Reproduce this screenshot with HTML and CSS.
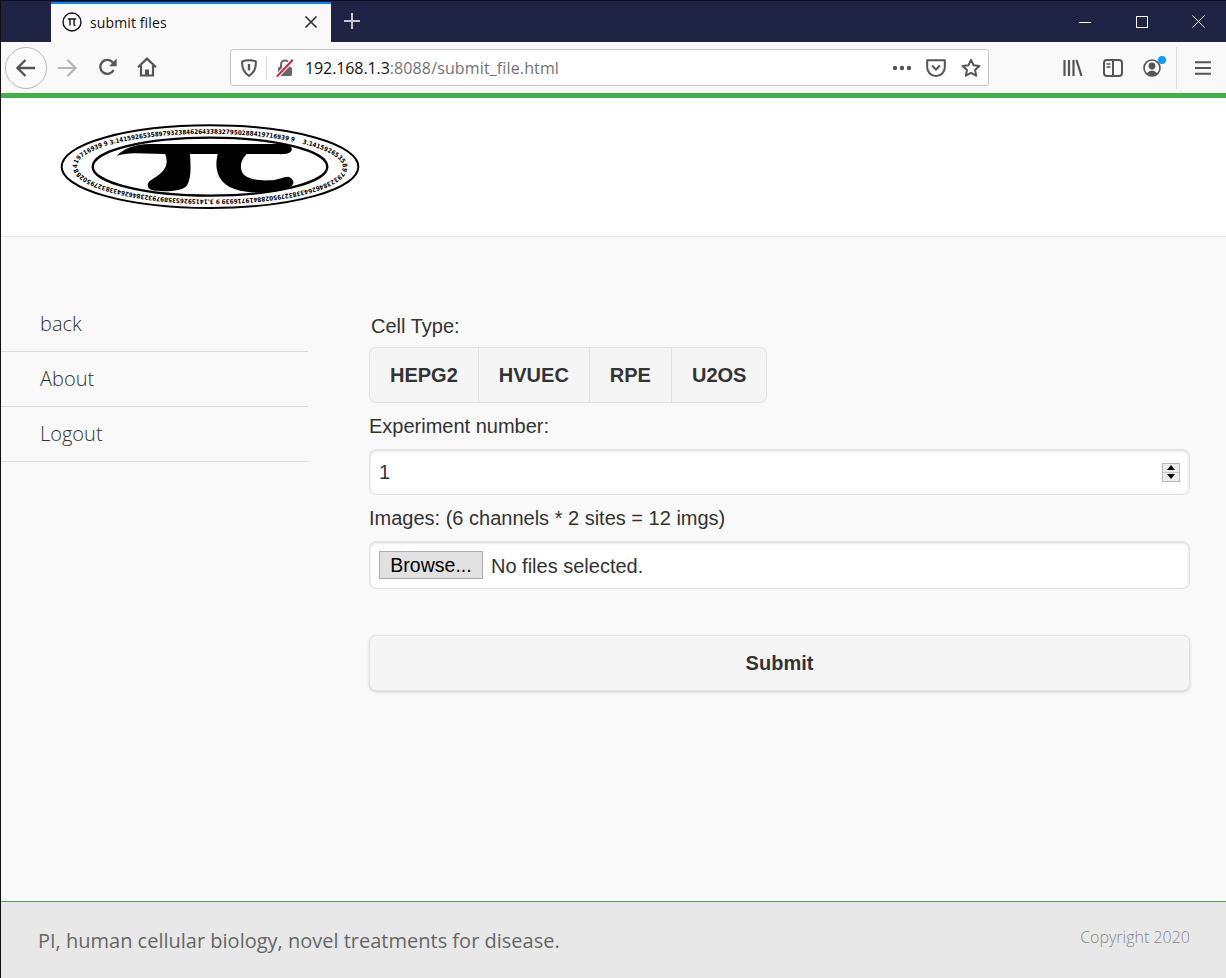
FILE: index.html
```html
<!DOCTYPE html>
<html lang="en">
<head>
<meta charset="utf-8">
<title>submit files</title>
<link rel="stylesheet" href="styles.css">
</head>
<body>
<div class="window">
  <div class="titlebar">
    <div class="tab">
      <svg class="favicon" viewBox="0 0 20 20"><circle cx="10" cy="10" r="9" fill="#fff" stroke="#111" stroke-width="1.4"/><path d="M5.8 7h8.4M8 7v6.5M12 7v5.2q0 1.3 1.5 1.2" fill="none" stroke="#111" stroke-width="1.4"/></svg>
      <span class="tab-title">submit files</span>
      <svg class="tab-close" viewBox="0 0 14 14"><path d="M1.5 1.5l11 11M12.5 1.5l-11 11" stroke="#333" stroke-width="1.7"/></svg>
    </div>
    <svg class="new-tab" viewBox="0 0 18 18"><path d="M9 1v16M1 9h16" stroke="#c4c6d2" stroke-width="2"/></svg>
    <div class="win-controls">
      <span class="win-btn"><svg width="12" height="12" viewBox="0 0 12 12"><path d="M0 6.5h12" stroke="#fff"/></svg></span>
      <span class="win-btn"><svg width="12" height="12" viewBox="0 0 12 12"><rect x=".5" y=".5" width="11" height="11" fill="none" stroke="#fff"/></svg></span>
      <span class="win-btn"><svg width="13" height="13" viewBox="0 0 13 13"><path d="M.5.5l12 12M12.5.5l-12 12" stroke="#fff"/></svg></span>
    </div>
  </div>
  <div class="toolbar">
    <span class="back-btn"><svg width="22" height="20" viewBox="0 0 22 20"><path d="M20 10H3M10.5 2L2.5 10l8 8" fill="none" stroke="#555" stroke-width="2.4"/></svg></span>
    <svg class="tb-forward" width="22" height="20" viewBox="0 0 22 20"><path d="M2 10h17M11.5 2l8 8-8 8" fill="none" stroke="#b5b5b6" stroke-width="2.2"/></svg>
    <svg class="tb-reload" width="20" height="20" viewBox="0 0 20 20"><path d="M15.6 13a7 7 0 1 1-.6-7.2" fill="none" stroke="#555" stroke-width="2.4"/><path d="M18.6 1.6v7.6h-7.4z" fill="#555"/></svg>
    <svg class="tb-home" width="20" height="20" viewBox="0 0 20 20"><path d="M1 10.2L10 1.6l9 8.6M4 8.6V18.5h12V8.6" fill="none" stroke="#555" stroke-width="2.2"/><path d="M8 18v-5.5h4V18z" fill="#555"/></svg>
    <div class="urlbar">
      <svg class="url-shield" width="16" height="18" viewBox="0 0 16 18"><path d="M1.2 2.4Q8 .2 14.8 2.4 15.4 12.5 8 16.8 .6 12.5 1.2 2.4z" fill="none" stroke="#555" stroke-width="2"/><path d="M6.8 5h2.4v6.4H6.8z" fill="#555"/></svg>
      <span class="url-sep"></span>
      <svg class="url-lock" width="18" height="20" viewBox="0 0 18 20"><path d="M5 10V6.5a4 4 0 0 1 8 0V10" fill="none" stroke="#666" stroke-width="2"/><rect x="2" y="9" width="14" height="9" rx="1.5" fill="#666"/><path d="M.8 18.6L16.8 1.8" stroke="#f9f9fa" stroke-width="4.4"/><path d="M.8 18.6L16.8 1.8" stroke="#e8173e" stroke-width="2"/></svg>
      <span class="url-text"><span class="url-host">192.168.1.3</span>:8088/submit_file.html</span>
      <svg class="url-dots" width="20" height="6" viewBox="0 0 20 6"><circle cx="3" cy="3" r="2.2" fill="#555"/><circle cx="10" cy="3" r="2.2" fill="#555"/><circle cx="17" cy="3" r="2.2" fill="#555"/></svg>
      <svg class="url-pocket" width="20" height="18" viewBox="0 0 20 18"><path d="M1.2 1.2h17.6v7a8.8 8.8 0 0 1-17.6 0z" fill="none" stroke="#555" stroke-width="2" stroke-linejoin="round"/><path d="M6 6.5l4 4 4-4" fill="none" stroke="#555" stroke-width="2"/></svg>
      <svg class="url-star" width="20" height="20" viewBox="0 0 20 20"><path d="M10 1.8l2.5 5.4 5.9.7-4.4 4 1.2 5.8L10 14.8l-5.2 2.9L6 11.9l-4.4-4 5.9-.7z" fill="none" stroke="#555" stroke-width="2" stroke-linejoin="round"/></svg>
    </div>
    <svg class="tb-library" width="20" height="18" viewBox="0 0 20 18"><path d="M1.5 1v16M6 1v16M10.5 1v16M13.5 1l5 16" fill="none" stroke="#555" stroke-width="2.2"/></svg>
    <svg class="tb-sidebar" width="20" height="18" viewBox="0 0 20 18"><rect x="1" y="1" width="18" height="16" rx="3" fill="none" stroke="#555" stroke-width="2"/><path d="M10 1v16" stroke="#555" stroke-width="2"/><path d="M3.5 5h4M3.5 8h4" stroke="#555" stroke-width="1.6"/></svg>
    <span class="account">
      <svg width="18" height="18" viewBox="0 0 18 18"><circle cx="9" cy="9" r="8" fill="none" stroke="#555" stroke-width="1.6"/><circle cx="9" cy="7" r="3.4" fill="#555"/><path d="M3.6 14.4q5.4-6 10.8 0Q9 18 3.6 14.4z" fill="#555"/></svg>
      <span class="account-dot"></span>
    </span>
    <span class="tb-sep"></span>
    <svg class="tb-menu" width="16" height="14" viewBox="0 0 16 14"><path d="M0 1.2h16M0 7h16M0 12.8h16" stroke="#555" stroke-width="2"/></svg>
  </div>
  <div class="accent"></div>
  <header class="site-header">
    <svg class="logo" viewBox="0 0 960 315" aria-label="PI logo">
      <defs>
        <path id="ring" d="M757 86.4A392 97 0 1 1 203 223.6A392 97 0 1 1 757 86.4"/>
      </defs>
      <ellipse cx="480" cy="155" rx="445" ry="124" fill="#fff" stroke="#000" stroke-width="6"/>
      <text class="logo-digits"><textPath href="#ring" textLength="1680" lengthAdjust="spacingAndGlyphs">3.14159265358979323846264338327950288419716939 9 3.14159265358979323846264338327950288419716939 9 3.14159265358979323846264338327950288419716939 9</textPath></text>
      <ellipse cx="480" cy="155" rx="352" ry="87" fill="#fff" stroke="#000" stroke-width="7"/>
      <path d="M200 122C225 100 250 88 300 87L690 87C715 87 728 95 725 105C722 118 700 118 680 117L590 117C572 135 568 155 578 175C590 192 625 198 660 196C685 195 700 185 715 185C730 190 735 203 725 213C700 232 640 235 590 230C535 225 505 200 500 160C498 145 500 130 503 117L420 117C422 150 425 190 410 212C400 228 340 232 308 226C292 222 288 208 300 197C325 182 350 165 350 140C350 130 348 122 345 117L260 115C240 114 215 118 200 122Z" fill="#000"/>
    </svg>
  </header>
  <main class="content">
    <nav class="sidenav">
      <a class="nav-item">back</a>
      <a class="nav-item">About</a>
      <a class="nav-item">Logout</a>
    </nav>
    <form class="form">
      <label class="label label-cell">Cell Type:</label>
      <div class="btn-group">
        <button type="button" class="seg">HEPG2</button>
        <button type="button" class="seg">HVUEC</button>
        <button type="button" class="seg">RPE</button>
        <button type="button" class="seg">U2OS</button>
      </div>
      <label class="label label-exp">Experiment number:</label>
      <div class="field field-number">
        <span class="field-value">1</span>
        <span class="spinner">
          <span class="spin"><svg width="8" height="5" viewBox="0 0 8 5"><path d="M4 0l4 5H0z"/></svg></span>
          <span class="spin"><svg width="8" height="5" viewBox="0 0 8 5"><path d="M0 0h8L4 5z"/></svg></span>
        </span>
      </div>
      <label class="label label-img">Images: (6 channels * 2 sites = 12 imgs)</label>
      <div class="field field-file">
        <button type="button" class="browse">Browse...</button>
        <span class="file-status">No files selected.</span>
      </div>
      <button type="button" class="submit">Submit</button>
    </form>
  </main>
  <footer class="footer">
    <span class="foot-left">PI, human cellular biology, novel treatments for disease.</span>
    <span class="foot-right">Copyright 2020</span>
  </footer>
</div>
</body>
</html>
```
FILE: styles.css
```css
* { box-sizing: border-box; }
html, body { margin: 0; padding: 0; }
body { width: 1226px; height: 978px; overflow: hidden; background: #f9f9f9; }
.window { width: 1226px; height: 978px; display: flex; flex-direction: column; border-left: 1px solid #111; font-family: "Liberation Sans", Arial, sans-serif; color: #333; }

.titlebar { height: 42px; flex: none; background: #1f2445; display: flex; align-items: stretch; padding-top: 1px; border-top: 1px solid #0d0f20; }
.tab { width: 280px; margin-left: 50px; background: #f9f9fa; border-top: 2px solid #0a84ff; display: flex; align-items: center; padding: 0 13px 2px 11px; }
.favicon { width: 20px; height: 20px; flex: none; }
.tab-title { margin-left: 8px; font: 14px "Open Sans", sans-serif; letter-spacing: .12px; color: #111; flex: 1; }
.tab-close { width: 14px; height: 14px; }
.new-tab { width: 18px; height: 18px; margin: 10px 0 0 12px; }
.win-controls { margin-left: auto; display: flex; margin-right: -1px; }
.win-btn { width: 57px; display: flex; align-items: center; justify-content: center; padding-bottom: 1px; }

.toolbar { height: 51px; flex: none; background: #f9f9fa; display: flex; align-items: center; position: relative; }
.back-btn { width: 42px; height: 42px; margin-left: 4px; border: 1px solid #b9b9bb; border-radius: 50%; background: #fbfbfb; display: flex; align-items: center; justify-content: center; flex: none; }
.tb-forward { margin-left: 9px; flex: none; }
.tb-reload { margin: 0 0 2px 20px; flex: none; }
.tb-home { margin: 0 0 2px 19px; flex: none; }
.urlbar { width: 759px; height: 37px; margin-left: 73px; flex: none; background: #fff; border: 1px solid #c4c4c6; border-radius: 3px; display: flex; align-items: center; }
.url-shield { margin-left: 10px; flex: none; }
.url-sep { width: 1px; height: 24px; background: #dcdcde; margin-left: 9px; flex: none; }
.url-lock { margin-left: 9px; flex: none; }
.url-text { margin-left: 11px; font: 16px "Open Sans", sans-serif; color: #737373; letter-spacing: .13px; flex: 1; white-space: nowrap; }
.url-host { color: #111; letter-spacing: -.1px; }
.url-dots { margin-right: 14px; flex: none; }
.url-pocket { margin-right: 15px; flex: none; }
.url-star { margin-right: 7px; flex: none; }
.tb-library { margin-left: 74px; flex: none; }
.tb-sidebar { margin-left: 20px; flex: none; }
.account { width: 18px; height: 18px; margin-left: 20px; position: relative; flex: none; display: block; }
.account svg { display: block; }
.account-dot { position: absolute; top: -3px; right: -5px; width: 8px; height: 8px; border-radius: 50%; background: #0a9dff; }
.tb-sep { width: 1px; height: 42px; background: #dedee0; margin-left: 15px; flex: none; }
.tb-menu { margin-left: 18px; flex: none; }

.accent { height: 5px; flex: none; background: #3fb14c; }
.site-header { height: 139px; flex: none; background: #fff; border-bottom: 1px solid #e9e9e9; display: flex; padding: 17px 0 0 49px; }
.logo { width: 320px; height: 105px; display: block; }
.logo-digits { font: 700 19px "DejaVu Sans", sans-serif; fill: #000; }

.content { flex: 1; display: flex; background: #f9f9f9; padding-top: 60px; }
.sidenav { width: 307px; flex: none; display: flex; flex-direction: column; }
.nav-item { height: 55px; flex: none; padding: 11px 0 0 39px; font: 300 20px/32px "Open Sans", sans-serif; color: #333; border-bottom: 1px solid #dedede; }

.form { width: 821px; margin-left: 61px; display: flex; flex-direction: column; align-items: stretch; }
.label { font-size: 20px; line-height: 22px; color: #333; display: block; }
.label-cell { margin: 18px 0 0 2px; }
.btn-group { align-self: flex-start; display: flex; height: 56px; margin-top: 10px; border: 1px solid #e2e2e2; border-radius: 7px; background: #f5f5f5; }
.seg { height: 100%; padding: 0 20px; border: 0; border-left: 1px solid #e2e2e2; background: transparent; font: 700 20px "Liberation Sans", Arial, sans-serif; color: #333; }
.seg:first-child { border-left: 0; }
.label-exp { margin-top: 12px; }
.field { width: 821px; background: #fff; border: 1px solid #e2e2e2; border-radius: 7px; box-shadow: inset 0 1px 3px rgba(0,0,0,.16); display: flex; align-items: center; }
.field-number { height: 46px; margin-top: 12px; padding: 0 9px; }
.field-value { font-size: 20px; color: #333; flex: 1; }
.spinner { width: 18px; height: 19px; background: #c9c9c9; border: 1px solid #b9b9b9; display: flex; flex-direction: column; justify-content: space-between; }
.spin { height: 8px; background: #ececec; display: flex; align-items: center; justify-content: center; }
.spin svg { display: block; }
.label-img { margin-top: 12px; }
.field-file { height: 48px; margin-top: 12px; padding: 0 9px; }
.browse { width: 104px; height: 28px; padding: 1px 0 0; background: #e1e1e1; border: 1px solid #adadad; font: 19.5px "Liberation Sans", Arial, sans-serif; color: #000; }
.file-status { margin-left: 8px; padding-top: 2px; font-size: 20px; color: #333; }
.submit { width: 821px; height: 56px; margin-top: 46px; background: #f5f5f5; border: 1px solid #e2e2e2; border-radius: 7px; box-shadow: 0 1px 3px rgba(0,0,0,.16); font: 700 20px "Liberation Sans", Arial, sans-serif; color: #333; }

.footer { height: 77px; flex: none; background: #e8e8e8; border-top: 1px solid #5aa15e; display: flex; justify-content: space-between; padding: 0 36px 0 37px; }
.foot-left { font: 20px/27px "Open Sans", sans-serif; color: #666; margin-top: 25px; }
.foot-right { font: 300 16px/22px "Open Sans", sans-serif; color: #888; margin-top: 24px; }
```
